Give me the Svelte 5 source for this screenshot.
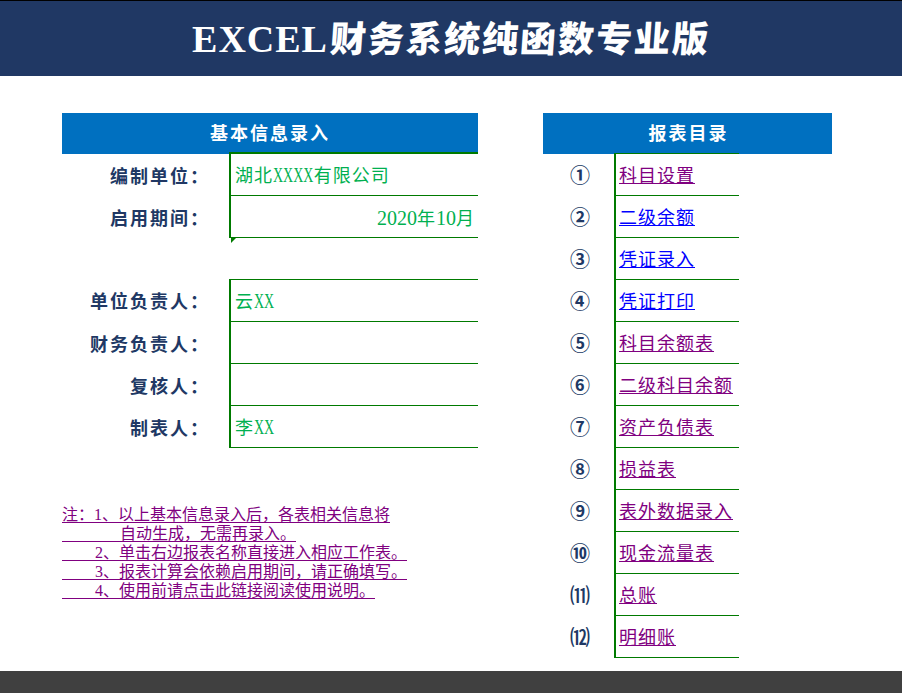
<script>
	const links = [
		{ no: '①', name: '科目设置', seen: true },
		{ no: '②', name: '二级余额' },
		{ no: '③', name: '凭证录入' },
		{ no: '④', name: '凭证打印' },
		{ no: '⑤', name: '科目余额表', seen: true },
		{ no: '⑥', name: '二级科目余额', seen: true },
		{ no: '⑦', name: '资产负债表', seen: true },
		{ no: '⑧', name: '损益表', seen: true },
		{ no: '⑨', name: '表外数据录入', seen: true },
		{ no: '⑩', name: '现金流量表', seen: true },
		{ no: '⑾', name: '总账', seen: true },
		{ no: '⑿', name: '明细账', seen: true }
	];
</script>

<div class="page">
	<header class="banner">
		<h1><span class="en">EXCEL</span><span class="cn">财务系统纯函数专业版</span></h1>
	</header>

	<main class="sheet">
		<section class="info">
			<h2>基本信息录入</h2>

			<div class="group first">
				<div class="row">
					<span class="label">编制单位：</span>
					<span class="value">湖北<span class="xs four">XXXX</span>有限公司</span>
				</div>
				<div class="row">
					<span class="label">启用期间：</span>
					<span class="value end"><span class="num">2020</span>年<span class="num">10</span>月</span>
				</div>
				<i class="handle"></i>
			</div>

			<div class="group second">
				<div class="row">
					<span class="label">单位负责人：</span>
					<span class="value">云<span class="xs two">XX</span></span>
				</div>
				<div class="row">
					<span class="label">财务负责人：</span>
					<span class="value"></span>
				</div>
				<div class="row">
					<span class="label">复核人：</span>
					<span class="value"></span>
				</div>
				<div class="row">
					<span class="label">制表人：</span>
					<span class="value">李<span class="xs two">XX</span></span>
				</div>
			</div>

			<div class="notes">
				<div class="note">注：1、以上基本信息录入后，各表相关信息将</div>
				<div class="note wrap">自动生成，无需再录入。</div>
				<div class="note step">2、单击右边报表名称直接进入相应工作表。</div>
				<div class="note step">3、报表计算会依赖启用期间，请正确填写。</div>
				<div class="note step">4、使用前请点击此链接阅读使用说明。</div>
			</div>
		</section>

		<section class="catalog">
			<h2>报表目录</h2>
			<div class="list">
				{#each links as link}
					<div class="item">
						<span class="no">{link.no}</span>
						<span class="cell">
							<a href="#top" class:seen={link.seen}>{link.name}</a>
						</span>
					</div>
				{/each}
			</div>
		</section>
	</main>

	<footer class="foot"></footer>
</div>

<style>
	:global(body) {
		background: #fff;
	}
	.page {
		display: flex;
		flex-direction: column;
		height: 693px;
		font-family: "Liberation Serif", "Noto Sans CJK SC", serif;
		overflow: hidden;
	}
	.banner {
		display: flex;
		align-items: center;
		justify-content: center;
		box-sizing: border-box;
		height: 76px;
		padding-top: 3px;
		border-top: 1px solid #000;
		background: #203864;
	}
	h1 {
		margin: 0;
		color: #fff;
		line-height: 46px;
		white-space: nowrap;
	}
	.en {
		font-size: 38px;
		font-weight: 700;
		letter-spacing: 1px;
		margin-right: 2px;
	}
	.cn {
		display: inline-block;
		font-weight: 900;
		font-size: 36px;
		letter-spacing: 2px;
		transform: skewX(-4deg);
	}
	.sheet {
		display: flex;
		gap: 65px;
		padding: 37px 0 0 62px;
	}
	h2 {
		margin: 0;
		height: 41px;
		background: #0070c0;
		color: #fff;
		font-size: 18px;
		font-weight: 700;
		letter-spacing: 2px;
		line-height: 42px;
		text-align: center;
	}
	.info {
		width: 416px;
	}
	.catalog {
		width: 289px;
	}
	.catalog h2 {
		text-indent: 2px;
	}
	.group {
		position: relative;
	}
	.group.first {
		margin-top: -2px;
		padding-top: 2px;
	}
	.group.first::before {
		content: "";
		position: absolute;
		top: 0;
		left: 167px;
		right: 0;
		height: 2px;
		background: #007a00;
	}
	.group.second {
		margin-top: 41px;
	}
	.group.second .row:first-child {
		height: 43px;
	}
	.group.second .row:first-child .value {
		border-top: 1px solid #007a00;
	}
	.row {
		display: flex;
		height: 42px;
	}
	.label {
		width: 148px;
		padding-right: 19px;
		color: #203864;
		font-size: 18px;
		font-weight: 700;
		letter-spacing: 2px;
		line-height: 46px;
		text-align: right;
	}
	.value {
		flex: 1;
		padding: 0 3px 0 4px;
		border-left: 2px solid #007a00;
		border-bottom: 1px solid #007a00;
		color: #00b050;
		font-size: 18px;
		letter-spacing: 1px;
		line-height: 44px;
		white-space: nowrap;
	}
	.value.end {
		text-align: right;
	}
	.num {
		font-size: 20px;
		letter-spacing: 0;
	}
	/* the sheet's X is far narrower than Liberation Serif's */
	.xs {
		display: inline-block;
		font-size: 20px;
		line-height: 20px;
		letter-spacing: 0;
		transform: scaleX(0.7);
		transform-origin: left;
	}
	.xs.four {
		margin-right: -17px;
	}
	.xs.two {
		margin-right: -9px;
	}
	.handle {
		position: absolute;
		left: 169px;
		bottom: -5px;
		width: 0;
		height: 0;
		border-top: 5px solid #007a00;
		border-right: 5px solid transparent;
	}
	.notes {
		margin-top: 56px;
		color: #800080;
		font-size: 16px;
		line-height: 21px;
	}
	.note {
		box-sizing: border-box;
		height: 19px;
		width: fit-content;
		border-bottom: 1px solid #800080;
		white-space: nowrap;
	}
	.note.wrap {
		padding-left: 58px;
	}
	.note.step {
		padding-left: 33px;
	}
	.list {
		display: flex;
		flex-direction: column;
	}
	.item {
		display: flex;
		height: 42px;
	}
	.no {
		width: 74px;
		margin-right: -3px;
		color: #203864;
		font-size: 20px;
		font-weight: 700;
		line-height: 45px;
		text-align: center;
	}
	.cell {
		box-sizing: border-box;
		width: 125px;
		padding-left: 3px;
		border-left: 2px solid #007a00;
		border-bottom: 1px solid #007a00;
		line-height: 45px;
	}
	.item:first-child .cell {
		position: relative;
	}
	.item:first-child .cell::before {
		content: "";
		position: absolute;
		top: -1px;
		left: -2px;
		right: 0;
		height: 1px;
		background: #007a00;
	}
	a {
		color: #0000ff;
		font-size: 18px;
		letter-spacing: 1px;
		text-decoration: underline;
		text-underline-offset: 1px;
	}
	a.seen {
		color: #800080;
	}
	.foot {
		margin-top: auto;
		height: 22px;
		background: #404040;
	}
</style>
